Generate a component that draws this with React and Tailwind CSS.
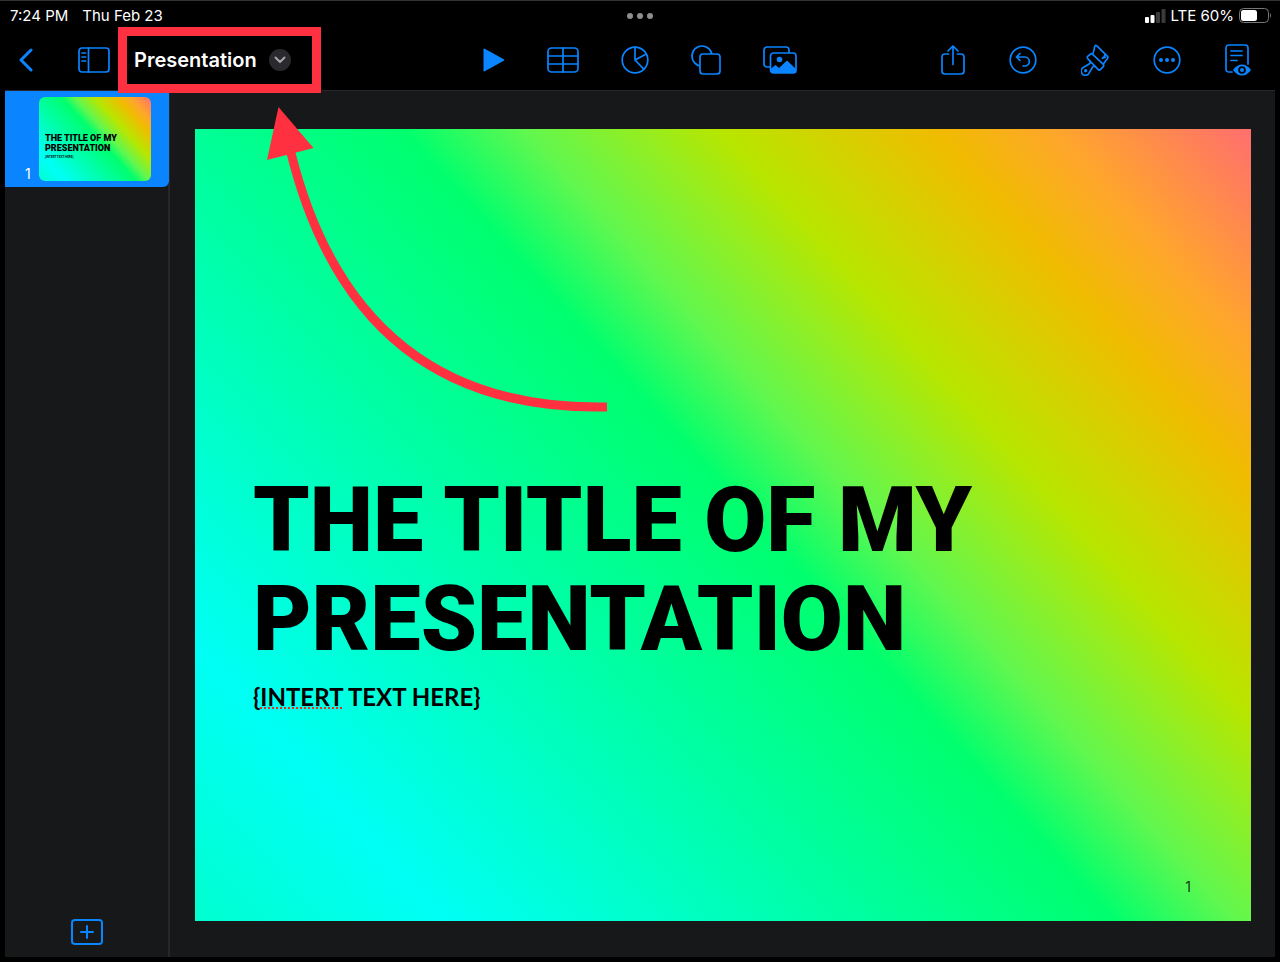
const SLIDE_BG =
    'bg-[linear-gradient(48deg,#00ffcf_0%,#00fff5_14%,#00ff6e_52%,#62f74e_59%,#b8e600_70%,#f0bc00_82%,#ffa52d_89%,#ff6e6e_100%)]';

const line = { fill: 'none', stroke: 'currentColor', strokeWidth: 1.7, strokeLinecap: 'round', strokeLinejoin: 'round' };

const BackIcon = () => (
    <svg width="14" height="24" viewBox="0 0 14 24" {...line} strokeWidth="3">
        <path d="M12 2 2 12l10 10" />
    </svg>
);

const SidebarIcon = () => (
    <svg width="32" height="26" viewBox="0 0 32 26" {...line}>
        <rect x="1" y="1" width="30" height="24" rx="3" />
        <path d="M10.5 1v24M4 6h3.500M4 10h3.500M4 14h3.500" />
    </svg>
);

const PlayIcon = () => (
    <svg width="22" height="24" viewBox="0 0 22 24" fill="currentColor">
        <path d="M.5 1.500Q.5.2 1.700.8L20.800 11.200q1 .8 0 1.600L1.700 23.200Q.5 23.800.5 22.500Z" />
    </svg>
);

const TableIcon = () => (
    <svg width="32" height="26" viewBox="0 0 32 26" {...line}>
        <rect x="1" y="1" width="30" height="24" rx="3.500" />
        <path d="M16 1v24M1 9h30M1 17h30" />
    </svg>
);

const ChartIcon = () => (
    <svg width="28" height="28" viewBox="0 0 28 28" {...line}>
        <circle cx="14" cy="14" r="12.800" />
        <path d="M14 1.200V14l8.800 9.200M14 14l11.200-6" />
    </svg>
);

const ShapesIcon = () => (
    <svg width="30" height="30" viewBox="0 0 30 30" {...line}>
        <circle cx="11" cy="11" r="10" />
        <rect x="9" y="9" width="20" height="20" rx="3" fill="black" />
    </svg>
);

const MediaIcon = () => (
    <svg width="34" height="28" viewBox="0 0 34 28" {...line}>
        <rect x="1" y="1" width="25" height="20" rx="3" />
        <rect x="7.500" y="7" width="25.500" height="20" rx="3" fill="black" />
        <circle cx="16.500" cy="13.500" r="2.800" fill="currentColor" stroke="none" />
        <path d="M7.500 23 12.500 19l3.500 3 8-7.500 9 8.500v1.500q0 2.500-2.500 2.500h-20.500q-2.500 0-2.500-2.500Z" fill="currentColor" stroke="none" />
    </svg>
);

const ShareIcon = () => (
    <svg width="24" height="30" viewBox="0 0 24 30" {...line}>
        <path d="M7.500 9H4Q1 9 1 12v14q0 3 3 3h16q3 0 3-3V12q0-3-3-3h-3.500" />
        <path d="M12 19.500V1M7 6l5-5 5 5" />
    </svg>
);

const UndoIcon = () => (
    <svg width="28" height="28" viewBox="0 0 28 28" {...line}>
        <circle cx="14" cy="14" r="12.800" />
        <path d="M11 7.500 7.500 11l3.500 3.500M7.500 11h8.300a4.400 4.400 0 0 1 0 9H14" />
    </svg>
);

const BrushIcon = () => (
    <svg width="28" height="32" viewBox="0 0 84 94" {...line} strokeWidth="5">
        <path d="M36 27Q40 16 41 7q1-6 6-3l33 33q2 3-1 6L67 59" />
        <path d="M72 29q1 9-8 13l9-3" />
        <path d="M29 29q3-2 6 1l32 30q3 4 0 7l-9 9q-3 3-7-1L20 43q-3-4 0-7Z" />
        <path d="M28 52q1 5-5 8L8 69a12.500 12.500 0 1 0 15 19l12-20q3-5 8-1" />
        <circle cx="14" cy="79" r="2.500" fill="currentColor" />
    </svg>
);

const MoreIcon = () => (
    <svg width="28" height="28" viewBox="0 0 28 28" {...line}>
        <circle cx="14" cy="14" r="12.800" />
        <g fill="currentColor" stroke="none">
            <circle cx="8" cy="14" r="2" />
            <circle cx="14" cy="14" r="2" />
            <circle cx="20" cy="14" r="2" />
        </g>
    </svg>
);

const NotesIcon = () => (
    <svg width="26" height="32" viewBox="0 0 26 32" {...line}>
        <path d="M7 28H4q-3 0-3-3V4q0-3 3-3h16q3 0 3 3v16" />
        <path d="M6 7h11M6 11.500h11M6 16.500h6" />
        <path d="M8 26q4-5.500 9-5.500t9 5.500q-4 5.500-9 5.500T8 26Z" fill="currentColor" stroke="none" />
        <circle cx="17" cy="26" r="2.900" fill="currentColor" stroke="black" strokeWidth="1.800" />
    </svg>
);

const insertTools = [
    { label: 'Play', Icon: PlayIcon },
    { label: 'Table', Icon: TableIcon },
    { label: 'Chart', Icon: ChartIcon },
    { label: 'Shape', Icon: ShapesIcon },
    { label: 'Media', Icon: MediaIcon },
];

const docTools = [
    { label: 'Share', Icon: ShareIcon },
    { label: 'Undo', Icon: UndoIcon },
    { label: 'Format', Icon: BrushIcon },
    { label: 'More', Icon: MoreIcon },
    { label: 'View options', Icon: NotesIcon },
];

const ToolButton = ({ label, Icon }) => (
    <button type="button" aria-label={label} className="shrink-0 text-[#0a84ff]">
        <Icon />
    </button>
);

const StatusBar = () => (
    <div className="grid grid-cols-[1fr_auto_1fr] items-center h-[30px] border-t border-[#333436] text-[15px] leading-5">
        <div className="flex gap-[14px] pl-[10px]">
            <span>7:24 PM</span>
            <span>Thu Feb 23</span>
        </div>
        <div className="flex gap-1">
            <span className="size-[6px] rounded-full bg-[#8e8e93]" />
            <span className="size-[6px] rounded-full bg-[#8e8e93]" />
            <span className="size-[6px] rounded-full bg-[#8e8e93]" />
        </div>
        <div className="flex items-center justify-end gap-[5px] pr-2">
            <svg width="21" height="14" viewBox="0 0 21 14" fill="white">
                <rect x="0" y="8" width="4" height="6" rx="1" />
                <rect x="5.500" y="6" width="4" height="8" rx="1" />
                <rect x="11" y="3" width="4" height="11" rx="1" fill="#3a3a3c" />
                <rect x="16.500" y="0" width="4" height="14" rx="1" fill="#3a3a3c" />
            </svg>
            <span>LTE 60%</span>
            <svg width="33" height="15" viewBox="0 0 33 15" fill="none">
                <rect x=".5" y=".5" width="29" height="14" rx="4" stroke="#77777b" />
                <rect x="2" y="2" width="16" height="11" rx="2.500" fill="white" />
                <path d="M31 5v5q2-2.500 0-5Z" fill="#77777b" />
            </svg>
        </div>
    </div>
);

const Toolbar = () => (
    <header className="grid grid-cols-[1fr_auto_1fr] items-center h-[60px]">
        <div className="flex items-center pl-[19px]">
            <ToolButton label="Back" Icon={BackIcon} />
            <div className="flex items-center pl-[45px]">
                <ToolButton label="Slide navigator" Icon={SidebarIcon} />
            </div>
            <button type="button" className="relative flex items-center gap-3 ml-6 text-[20px] leading-6 font-semibold">
                Presentation
                <span className="flex items-center justify-center size-[22px] rounded-full bg-[#2a2a2e]">
                    <svg width="12" height="8" viewBox="0 0 12 8" {...line} stroke="#a5a5aa" strokeWidth="2">
                        <path d="m1.500 1.500 4.500 4.500 4.500-4.500" />
                    </svg>
                </span>
                {/* highlight around the document name */}
                <span className="absolute -inset-y-[21px] -left-4 -right-[30px] border-[9px] border-[#ff3040] pointer-events-none z-10" />
            </button>
        </div>
        <div className="flex items-center gap-[42px]">
            {insertTools.map((tool) => <ToolButton key={tool.label} {...tool} />)}
        </div>
        <div className="flex items-center justify-end gap-11 pr-[29px]">
            {docTools.map((tool) => <ToolButton key={tool.label} {...tool} />)}
        </div>
    </header>
);

const SlideNavigator = () => (
    <nav className="flex flex-col justify-between w-[165px] shrink-0 border-r-2 border-[#26272a]">
        <a href="#slide-1" className="flex items-end py-[6px] pl-5 bg-[#0a84ff] rounded-br-md -mr-px">
            <span className="w-[14px] text-[14px] leading-[14px]">1</span>
            <span className={`flex flex-col w-28 aspect-[4/3] rounded-md pt-9 pl-[6px] text-black whitespace-nowrap ${SLIDE_BG}`}>
                <span className="font-['Roboto'] font-black text-[9px] leading-[10px]">THE TITLE OF MY<br />PRESENTATION</span>
                <span className="font-['Lato'] font-bold text-[3px] leading-[8px]">{'{INTERT TEXT HERE}'}</span>
            </span>
        </a>
        <button type="button" aria-label="Add slide" className="self-center mb-3 text-[#0a84ff]">
            <svg width="32" height="26" viewBox="0 0 32 26" {...line} strokeWidth="2">
                <rect x="1" y="1" width="30" height="24" rx="3" />
                <path d="M16 7v12M10 13h12" />
            </svg>
        </button>
    </nav>
);

const Slide = () => (
    <section id="slide-1" className={`flex flex-col justify-between w-full aspect-[4/3] pt-[32%] pb-6 pl-[58px] pr-[60px] text-black ${SLIDE_BG}`}>
        <div className="mt-1">
            <h1 className="font-['Roboto'] font-black text-[90px] leading-[99px]">
                THE TITLE OF MY<br />PRESENTATION
            </h1>
            <p className="mt-3 font-['Lato'] font-bold text-[24px] leading-8">
                {'{'}
                <span className="underline decoration-dotted decoration-2 decoration-[#e03020] underline-offset-2">INTERT</span>
                {' TEXT HERE}'}
            </p>
        </div>
        <span className="self-end text-[14px] leading-5 text-black/80">1</span>
    </section>
);

const Arrow = () => (
    <svg width="342" height="306" viewBox="0 0 342 306" className="absolute left-[266px] top-[107px] pointer-events-none">
        <path d="M24.500 44C58 180 140 304 341 300" fill="none" stroke="#ff3040" strokeWidth="9" />
        <path d="M12.500 0 47.500 41 1 53Z" fill="#ff3040" />
    </svg>
);

const App = () => {
    return (
        <div className="relative flex flex-col min-h-screen bg-black text-white font-['Inter',sans-serif]">
            <StatusBar />
            <Toolbar />
            <main className="flex flex-1 mx-[5px] mb-[5px] border-t border-[#26272a] bg-[#17181a]">
                <SlideNavigator />
                <div className="flex-1 pt-[38px] pb-9 pl-[25px] pr-6">
                    <Slide />
                </div>
            </main>
            <Arrow />
        </div>
    );
};

export default App;
